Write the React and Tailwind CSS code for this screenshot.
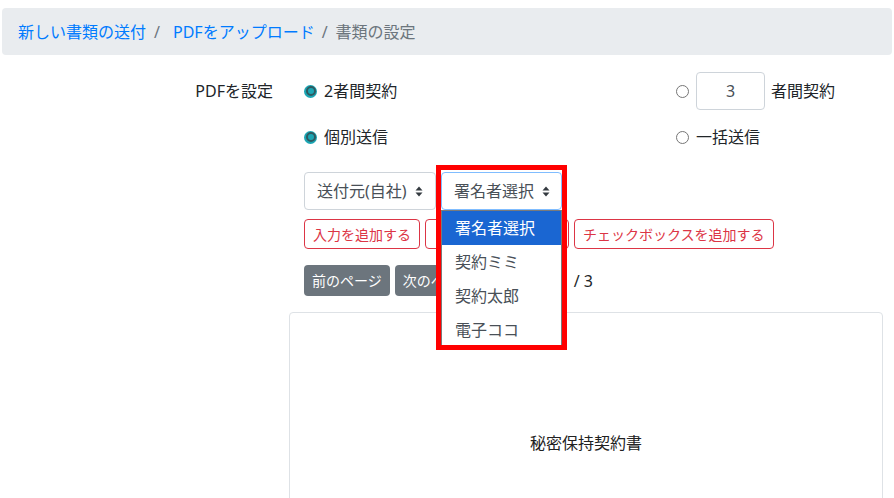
import React from 'react'

const Caret = () => (
  <svg width="8" height="11" viewBox="0 0 8 11" className="ml-[8px] shrink-0">
    <path d="M4 0.5 L7.5 4.5 H0.5 Z" fill="#343a40" />
    <path d="M4 10.5 L7.5 6.5 H0.5 Z" fill="#343a40" />
  </svg>
)

const Radio = ({ checked }) =>
  checked ? (
    <span className="w-[13px] h-[13px] rounded-full bg-[#1ba6b4] flex items-center justify-center shrink-0">
      <span className="w-[10px] h-[10px] rounded-full border-[2px] border-[#2f5a60] bg-[#1ba6b4]" />
    </span>
  ) : (
    <span className="w-[13px] h-[13px] rounded-full border border-[#767676] bg-white shrink-0" />
  )

const signers = ['署名者選択', '契約ミミ', '契約太郎', '電子ココ']

export default function App() {
  return (
    <div className="w-[894px] h-[498px] overflow-hidden bg-white text-[#212529] font-['Noto_Sans','Noto_Sans_CJK_JP',sans-serif]">
      {/* breadcrumb */}
      <div className="mx-[2px] mt-[8px] h-[47px] rounded bg-[#e9ecef] pl-[16px] flex items-center text-[16px]">
        <span className="text-[#007bff]">新しい書類の送付</span>
        <span className="text-[#6c757d] pl-[8px] pr-[13px]">/</span>
        <span className="text-[#007bff]">PDFをアップロード</span>
        <span className="text-[#6c757d] pl-[7px] pr-[8px]">/</span>
        <span className="text-[#6c757d]">書類の設定</span>
      </div>

      <div className="flex mt-[17px]">
        <div className="w-[273px] shrink-0 text-right text-[16px] h-[38px] leading-[38px]">PDFを設定</div>

        <div className="ml-[16px] w-[594px] flex flex-col">
          {/* radio rows */}
          <div className="pl-[15px] grid grid-cols-[372px_1fr] text-[16px]">
            <div className="flex items-center gap-[7px] h-[38px]">
              <Radio checked />
              <span>2者間契約</span>
            </div>
            <div className="flex items-center h-[38px]">
              <Radio />
              <div className="ml-[7px] w-[69px] h-[38px] border border-[#ced4da] rounded flex items-center justify-center text-[#495057]">3</div>
              <span className="ml-[6px]">者間契約</span>
            </div>
            <div className="flex items-center gap-[7px] h-[24px] mt-[15px]">
              <Radio checked />
              <span>個別送信</span>
            </div>
            <div className="flex items-center gap-[7px] h-[24px] mt-[15px]">
              <Radio />
              <span>一括送信</span>
            </div>
          </div>

          {/* selects */}
          <div className="pl-[15px] mt-[23px] flex gap-[5px] text-[16px] text-[#495057]">
            <div className="w-[132px] h-[38px] border border-[#ced4da] rounded flex items-center pl-[12px]">
              <span>送付元(自社)</span>
              <Caret />
            </div>
            <div className="relative">
              <div className="w-[121px] h-[38px] border border-[#80bdff] rounded flex items-center pl-[12px]">
                <span>署名者選択</span>
                <Caret />
              </div>
              <div className="absolute left-0 top-[38px] w-[121px] bg-white border border-[#7a7a7a] z-10">
                {signers.map((s, i) => (
                  <div
                    key={s}
                    className={
                      i === 0
                        ? 'h-[34px] flex items-center pl-[13px] bg-[#1a66d2] text-white'
                        : 'h-[34px] flex items-center pl-[13px] text-[#495057]'
                    }
                  >
                    {s}
                  </div>
                ))}
              </div>
              <div className="absolute left-[-5px] top-[-7px] w-[131px] h-[185px] border-[5px] border-[#ff0000] z-20 pointer-events-none" />
            </div>
          </div>

          {/* add buttons */}
          <div className="pl-[15px] mt-[9px] flex gap-[5px] text-[14px] text-[#dc3545]">
            <div className="h-[30px] px-[8px] border border-[#dc3545] rounded flex items-center">入力を追加する</div>
            <div className="h-[30px] w-[144px] border border-[#dc3545] rounded" />
            <div className="h-[30px] px-[8px] border border-[#dc3545] rounded flex items-center">チェックボックスを追加する</div>
          </div>

          {/* paging */}
          <div className="pl-[15px] mt-[16px] flex items-center text-[14px]">
            <div className="h-[31px] px-[8px] rounded bg-[#6c757d] text-white flex items-center">前のページ</div>
            <div className="ml-[5px] h-[31px] w-[87px] px-[8px] rounded bg-[#6c757d] text-white flex items-center overflow-hidden whitespace-nowrap">次のページ</div>
            <span className="w-[92px]" />
            <span className="text-[16px]">/ 3</span>
          </div>

          {/* pdf preview */}
          <div className="mt-[16px] h-[300px] border border-[#dee2e6] rounded flex justify-center pt-[119px]">
            <span className="text-[16px] text-[#222] font-['Liberation_Serif','Noto_Sans_CJK_JP',serif]">秘密保持契約書</span>
          </div>
        </div>
      </div>
    </div>
  )
}
